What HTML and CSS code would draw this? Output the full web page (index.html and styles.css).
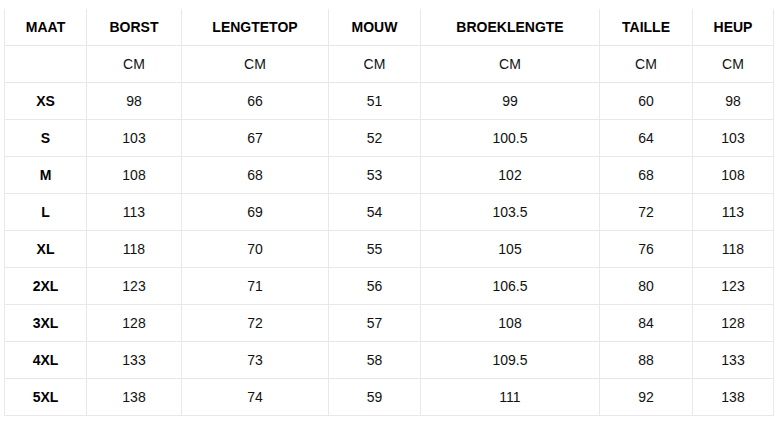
FILE: index.html
```html
<!DOCTYPE html>
<html lang="nl">
<head>
<meta charset="utf-8">
<title>Maattabel</title>
<link rel="stylesheet" href="styles.css">
</head>
<body>
<div class="size-table">
  <div class="cell head">MAAT</div>
  <div class="cell head">BORST</div>
  <div class="cell head">LENGTETOP</div>
  <div class="cell head">MOUW</div>
  <div class="cell head">BROEKLENGTE</div>
  <div class="cell head">TAILLE</div>
  <div class="cell head">HEUP</div>

  <div class="cell"></div>
  <div class="cell">CM</div>
  <div class="cell">CM</div>
  <div class="cell">CM</div>
  <div class="cell">CM</div>
  <div class="cell">CM</div>
  <div class="cell">CM</div>

  <div class="cell size">XS</div><div class="cell">98</div><div class="cell">66</div><div class="cell">51</div><div class="cell">99</div><div class="cell">60</div><div class="cell">98</div>
  <div class="cell size">S</div><div class="cell">103</div><div class="cell">67</div><div class="cell">52</div><div class="cell">100.5</div><div class="cell">64</div><div class="cell">103</div>
  <div class="cell size">M</div><div class="cell">108</div><div class="cell">68</div><div class="cell">53</div><div class="cell">102</div><div class="cell">68</div><div class="cell">108</div>
  <div class="cell size">L</div><div class="cell">113</div><div class="cell">69</div><div class="cell">54</div><div class="cell">103.5</div><div class="cell">72</div><div class="cell">113</div>
  <div class="cell size">XL</div><div class="cell">118</div><div class="cell">70</div><div class="cell">55</div><div class="cell">105</div><div class="cell">76</div><div class="cell">118</div>
  <div class="cell size">2XL</div><div class="cell">123</div><div class="cell">71</div><div class="cell">56</div><div class="cell">106.5</div><div class="cell">80</div><div class="cell">123</div>
  <div class="cell size">3XL</div><div class="cell">128</div><div class="cell">72</div><div class="cell">57</div><div class="cell">108</div><div class="cell">84</div><div class="cell">128</div>
  <div class="cell size">4XL</div><div class="cell">133</div><div class="cell">73</div><div class="cell">58</div><div class="cell">109.5</div><div class="cell">88</div><div class="cell">133</div>
  <div class="cell size">5XL</div><div class="cell">138</div><div class="cell">74</div><div class="cell">59</div><div class="cell">111</div><div class="cell">92</div><div class="cell">138</div>
</div>
</body>
</html>
```
FILE: styles.css
```css
html, body {
  margin: 0;
  background: #ffffff;
}
body {
  padding: 9px 0 0 4px;
  font-family: "Liberation Sans", Arial, sans-serif;
  font-size: 14px;
  color: #111;
}
.size-table {
  display: grid;
  grid-template-columns: 81px 94px 146px 91px 178px 92px 80px;
  grid-auto-rows: 36px;
  gap: 1px;
  width: max-content;
  padding: 0 1px 1px 1px;
  background: #e8e8e8;
}
.cell {
  background: #ffffff;
  display: flex;
  align-items: center;
  justify-content: center;
}
.head {
  font-weight: bold;
  color: #000;
}
.size {
  font-weight: bold;
  color: #000;
}
```
